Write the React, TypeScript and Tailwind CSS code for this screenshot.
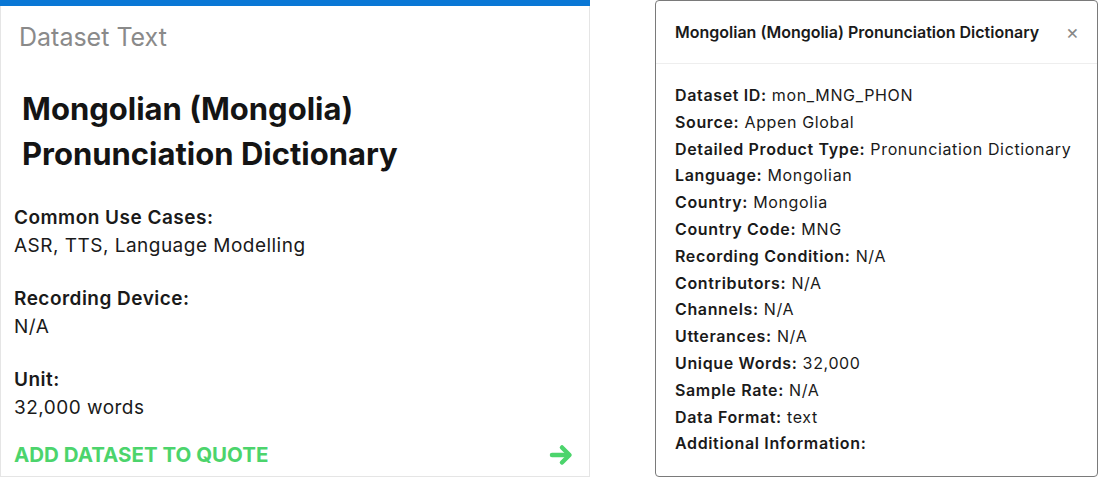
import React from 'react';

const font = { fontFamily: 'Inter, "Noto Sans", sans-serif' };

const details: [string, string][] = [
    ['Dataset ID:', 'mon_MNG_PHON'],
    ['Source:', 'Appen Global'],
    ['Detailed Product Type:', 'Pronunciation Dictionary'],
    ['Language:', 'Mongolian'],
    ['Country:', 'Mongolia'],
    ['Country Code:', 'MNG'],
    ['Recording Condition:', 'N/A'],
    ['Contributors:', 'N/A'],
    ['Channels:', 'N/A'],
    ['Utterances:', 'N/A'],
    ['Unique Words:', '32,000'],
    ['Sample Rate:', 'N/A'],
    ['Data Format:', 'text'],
    ['Additional Information:', ''],
];

const InfoGroup: React.FC<{ label: string; value: string }> = ({ label, value }) => (
    <div className="mb-[25px] tracking-[0.03em]">
        <div className="text-[19px] font-semibold leading-[28px] text-[#1a1a1a]">{label}</div>
        <div className="text-[19px] leading-[28px] text-[#1a1a1a]">{value}</div>
    </div>
);

export default function App() {
    return (
        <div className="flex w-[1100px] h-[478px] bg-white" style={font}>
            {/* Dataset card */}
            <div className="w-[590px] h-[477px] border-r border-b border-l border-[#e5e5e5] flex flex-col">
                <div className="h-[6px] bg-[#0a77d5] -mx-px"></div>
                <div className="pl-[13px] pr-[15px] flex flex-col flex-1">
                    <div className="pl-[5px] mt-[16px] text-[25px] leading-[30px] text-[#8a8a8a]">Dataset Text</div>
                    <h1 className="pl-[8px] mt-[34px] text-[31px] font-bold leading-[45px] text-[#141414]">
                        Mongolian (Mongolia)<br />Pronunciation Dictionary
                    </h1>
                    <div className="mt-[28px]">
                        <InfoGroup label="Common Use Cases:" value="ASR, TTS, Language Modelling" />
                        <InfoGroup label="Recording Device:" value="N/A" />
                        <InfoGroup label="Unit:" value="32,000 words" />
                    </div>
                    <div className="flex items-center justify-between -mt-[6px] pr-[1px]">
                        <span className="text-[20.5px] font-bold text-[#4cd46c] leading-[28px]">ADD DATASET TO QUOTE</span>
                        <svg width="24" height="24" viewBox="0 0 24 24" fill="none" stroke="#4cd46c" strokeWidth="4.5" strokeLinecap="round" strokeLinejoin="round">
                            <path d="M3 12h16" />
                            <path d="M13 4.5l7.5 7.5-7.5 7.5" />
                        </svg>
                    </div>
                </div>
            </div>

            {/* Detail modal */}
            <div className="ml-[65px] w-[443px] h-[477px] border border-[#7a7a7a] rounded-[4px] flex flex-col">
                <div className="h-[63px] flex items-center justify-between pl-[19px] pr-[18px] border-b border-[#eeeeee]">
                    <span className="text-[16px] font-semibold text-[#1a1a1a]">Mongolian (Mongolia) Pronunciation Dictionary</span>
                    <span className="text-[20px] leading-none text-[#888]">×</span>
                </div>
                <div className="pl-[19px] pt-[18px]">
                    {details.map(([k, v]) => (
                        <div key={k} className="text-[16px] leading-[26.8px] tracking-[0.04em] text-[#1a1a1a]">
                            <span className="font-semibold">{k}</span>{v ? ' ' + v : ''}
                        </div>
                    ))}
                </div>
            </div>
        </div>
    );
}
